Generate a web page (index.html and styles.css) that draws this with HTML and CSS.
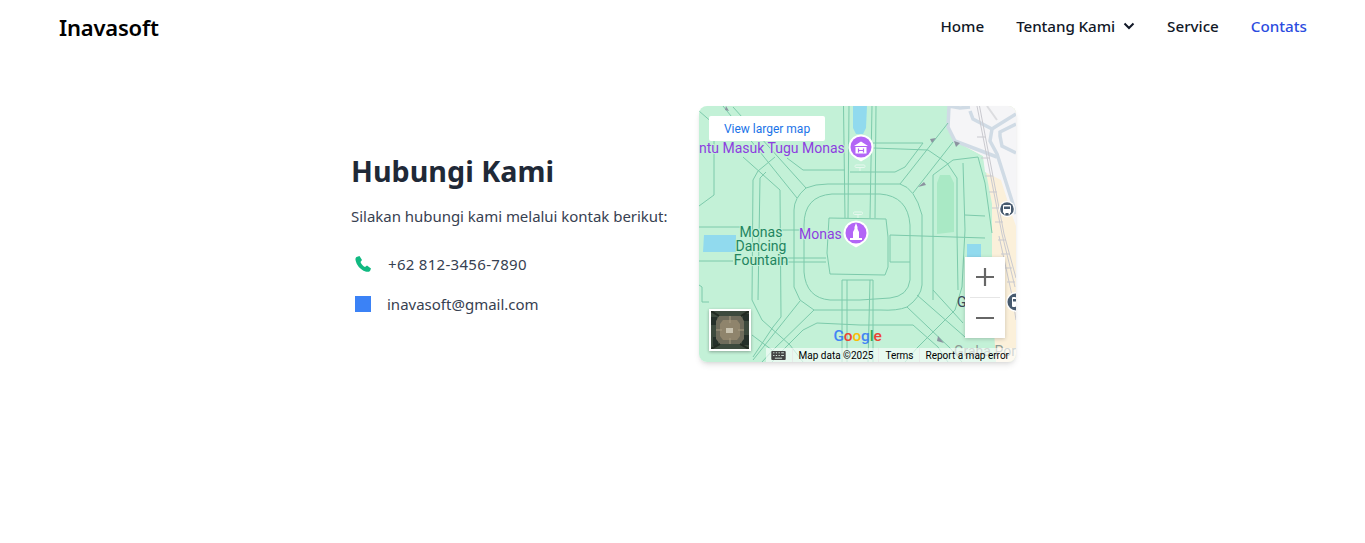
FILE: index.html
```html
<!DOCTYPE html>
<html lang="id">
<head>
<meta charset="utf-8">
<title>Inavasoft</title>
<link rel="stylesheet" href="styles.css">
</head>
<body>
<header class="navbar">
  <a class="brand" href="#">Inavasoft</a>
  <nav class="nav">
    <a class="nav-link" href="#">Home</a>
    <a class="nav-link nav-drop" href="#">Tentang Kami
      <svg class="chevron" viewBox="0 0 12 8" width="12" height="8"><path d="M1.500 1.500 6 6l4.500-4.500" fill="none" stroke="#111827" stroke-width="2"/></svg>
    </a>
    <a class="nav-link" href="#">Service</a>
    <a class="nav-link active" href="#">Contats</a>
  </nav>
</header>
<main class="contact">
  <section class="info">
    <h1 class="title">Hubungi Kami</h1>
    <p class="lead">Silakan hubungi kami melalui kontak berikut:</p>
    <ul class="list">
      <li class="item">
        <svg class="phone" viewBox="0 0 16 16" width="16" height="16"><path d="M1.500 1 4.500 0 7 4 5.500 6C6.500 8.500 8 10 10 11L12 9.500 16 12.500 15 15C14 16 12 16 10.500 15.500 5 13.500 1.500 9 .5 4 .3 2.800.7 1.600 1.500 1Z" fill="#10b981"/></svg>
        <span class="phone-text">+62 812-3456-7890</span>
      </li>
      <li class="item">
        <span class="square"></span>
        <span>inavasoft@gmail.com</span>
      </li>
    </ul>
  </section>
  <div class="map">
    <svg class="map-base" viewBox="699 106 317 256" width="317" height="256">
      <rect x="699" y="106" width="317" height="256" fill="#c3f1d7"/>
      <path d="M949 106 L948 127 L955 141 L983 156 L992 204 L992 300 L996 362 L1016 362 L1016 106Z" fill="#fbf0da"/>
      <path d="M949 106 L948 127 L955 141 L983 156 L985 172 L1001 180 L1012 215 L1016 226 L1016 106Z" fill="#f5f5f7"/>
      <g fill="none" stroke="#d0dbe5" stroke-width="3.500">
        <path d="M970 107 L960 108 L949 106 L948 127 L955 141 L997 157"/>
        <path d="M970 111 L973 119 L992 129 L995 127 L1016 114"/>
        <path d="M992 129 L990 141 L997 154 L1012 201 L1016 214"/>
        <path d="M1016 124 L1000 132 L1000 136 L1002 146 L1016 153"/>
      </g>
      <path d="M987 106 L997 120" fill="none" stroke="#dcdde0" stroke-width="2"/>
      <g fill="none" stroke="#c9c9cf" stroke-width="1">
        <path d="M977 106 L1002 234 L1015 287"/>
        <path d="M979.500 106 L1004 234 L1016 278"/>
        <path d="M999 236 L1013 300 L1016 320"/>
        <path d="M977 137h8M981 158h8M985 176h8M989 192h8M992 208h8M995 222h8M998 240h8M1001 254h8M1004 268h8M1007 282h8"/>
      </g>
      <path d="M853 106h14l-1 22-3 6h-7l-3-6Z" fill="#91daee"/>
      <path d="M704 235h32v17h-33Z" fill="#91daee"/>
      <rect x="967" y="244" width="14" height="14" fill="#91daee"/>
      <path d="M937 183 L940 175 L950 175 L954 183 L954 232 L937 234Z" fill="#a9e9c5"/>
      <g fill="none" stroke="#7ccaab" stroke-width="1">
        <path d="M699 111 L714 124 V195 L699 206"/>
        <path d="M733 107 L806 188"/>
        <path d="M723 106 L797 198"/>
        <path d="M699 227 H740"/>
        <path d="M699 261 H733"/>
        <path d="M699 285 L702 287 V302 H709"/>
        <path d="M743 157 L780 190 L781 317 L773 327 L753 357"/>
        <path d="M775 157 L758 171 L753 180 L752 300 L762 320 L790 345 L803 362"/>
        <path d="M758 300 L760 178 L766 172"/>
        <path d="M787 158 L803 170 H845"/>
        <path d="M794 230 V210 Q794 198 806 188 Q815 184 828 184 H900 Q915 188 922 215 V285 Q921 297 907 307 Q897 311 880 310 H814 L800 300 L794 287 Z"/>
        <path d="M804 225 Q804 196 832 194 H880 Q908 196 910 225 V280 Q908 296 890 298 L860 300 H830 Q806 298 804 272 Z"/>
        <path d="M829 218 L886 219 L888 237 V267 L885 275 L830 274 L827 253 Z"/>
        <path d="M780 230 H800"/>
        <path d="M780 258 H826"/>
        <path d="M780 262 H826"/>
        <path d="M843.500 106 L845 218"/>
        <path d="M849 106 L848 218"/>
        <path d="M872 106 L870 218"/>
        <path d="M876 106 L875 218"/>
        <path d="M873 143 H923 L905 167 L895 172 H850"/>
        <path d="M873 148 L928 150 L947 163 L957 178 V233 L958 290"/>
        <path d="M900 184 L948 123"/>
        <path d="M913 193 L953 142"/>
        <path d="M933 300 V175 L953 160 L978 157 L985 183 L992 233"/>
        <path d="M963 163 L965 230 L962 287 L955 310 L917 348 L905 362"/>
        <path d="M965 215 L985 216"/>
        <path d="M890 235 L985 238"/>
        <path d="M890 235 V262 H910"/>
        <path d="M917 295 L965 337"/>
        <path d="M907 307 L950 348 L962 362"/>
        <path d="M933 290 L963 323"/>
        <path d="M842 280 H873"/>
        <path d="M842 280 L842 362M847 280 L847 362M870 280 L868 362M873 280 L873 362"/>
        <path d="M860 325 H913 L938 347 L948 362"/>
        <path d="M860 325 L817 323 L803 330 L783 350 L772 362"/>
        <path d="M800 301 L753 360"/>
        <path d="M814 310 L773 350 L762 362"/>
        <path d="M752 335 L772 350"/>
      </g>
      <g fill="#8b93a0">
        <path d="M726 106l3 5-4-1z"/>
        <path d="M936 138l-6 1 2 4 z"/>
        <path d="M954 141l6 2-4 4z"/>
        <path d="M918 187l6-5 2 3z"/>
        <path d="M938 336l6 7-7-2z"/>
      </g>
      <g fill="none" stroke="#e6f8ee" stroke-width="1">
        <rect x="855" y="165" width="10" height="2.500" rx="1"/>
        <path d="M860 168v3"/>
        <rect x="853.500" y="212" width="9" height="2.500" rx="1"/>
        <path d="M858 215v3"/>
      </g>
      <g class="label-purple">
        <text x="699" y="153">ntu Masuk Tugu Monas</text>
        <text x="799" y="239">Monas</text>
      </g>
      <g class="label-green">
        <text x="761" y="237">Monas</text>
        <text x="761" y="251">Dancing</text>
        <text x="761" y="265">Fountain</text>
      </g>
      <path d="M861 134.500a12.500 12.500 0 0 1 6 23.500l-6 3.500-6-3.500a12.500 12.500 0 0 1 6-23.500z" fill="#fff"/>
      <circle cx="861" cy="147" r="10.500" fill="#b366f6"/>
      <path d="M854 146l7-4.500 7 4.500zM855.500 147h11v6.500h-11z" fill="#fff"/>
      <path d="M858.500 148.500v4M863.500 148.500v4M858.500 150.500h5" stroke="#b366f6" stroke-width="1.200" fill="none"/>
      <path d="M856 220.500a12.500 12.500 0 0 1 6 23.500l-6 3.500-6-3.500a12.500 12.500 0 0 1 6-23.500z" fill="#fff"/>
      <circle cx="856" cy="233" r="10.500" fill="#b366f6"/>
      <path d="M856 223 L857.500 227 V229 L859 232 V238 H862 V240 H850 V238 H853 V232 L854.500 229 V227Z" fill="#fff"/>
      <circle cx="1007" cy="209" r="8" fill="#fff"/>
      <circle cx="1007" cy="209" r="6.800" fill="#475a6e"/>
      <rect x="1003" y="205" width="8" height="8" rx="1" fill="#fff"/>
      <rect x="1004" y="206.500" width="6" height="2.500" fill="#475a6e"/>
      <rect x="1004" y="213" width="1.500" height="1.500" fill="#fff"/>
      <rect x="1008.500" y="213" width="1.500" height="1.500" fill="#fff"/>
      <circle cx="1016" cy="302" r="10" fill="#fff"/>
      <circle cx="1016" cy="302" r="8.500" fill="#475a6e"/>
      <rect x="1012" y="297" width="4" height="10" rx="1" fill="#fff"/>
      <rect x="1013" y="299" width="3" height="2.500" fill="#475a6e"/>
      <text class="label-dark" x="957" y="307">G</text>
      <text class="label-faint" x="954" y="356">Graha Porta</text>
      <text class="logo" x="833.500" y="341"><tspan fill="#4285f4">G</tspan><tspan fill="#ea4335">o</tspan><tspan fill="#fbbc05">o</tspan><tspan fill="#4285f4">g</tspan><tspan fill="#34a853">l</tspan><tspan fill="#ea4335">e</tspan></text>
    </svg>
    <a class="larger" href="#">View larger map</a>
    <div class="thumb">
      <svg viewBox="0 0 38 38" width="38" height="38">
        <rect width="38" height="38" fill="#3d4a3e"/>
        <path d="M0 6h6v8H0zM32 3h6v7h-6zM2 26h5v9H2zM31 24h7v10h-7z" fill="#25302a"/>
        <path d="M8 5h22l3 5v18l-4 5H9l-4-5V10z" fill="#6f6c5c"/>
        <path d="M12 9h14l3 4v12l-3 4H12l-3-4V13z" fill="#8f846c"/>
        <rect x="15" y="17" width="7" height="5" fill="#c9c3b0"/>
        <path d="M19 5v7M19 27v6M5 19h6M27 19h6" stroke="#a89c82" stroke-width="1"/>
        <path d="M0 0l8 5M38 0l-8 5M0 38l9-5M38 38l-9-5" stroke="#222a22" stroke-width="2"/>
      </svg>
    </div>
    <div class="zoom">
      <button class="zoom-btn" type="button" aria-label="Zoom in"><svg viewBox="0 0 18 18" width="18" height="18"><path d="M0 9h18M9 0v18" stroke="#666" stroke-width="2.200"/></svg></button>
      <span class="zoom-line"></span>
      <button class="zoom-btn" type="button" aria-label="Zoom out"><svg viewBox="0 0 18 18" width="18" height="18"><path d="M0 9h18" stroke="#666" stroke-width="2.200"/></svg></button>
    </div>
    <div class="attrib">
      <span class="attrib-cell key"><svg viewBox="0 0 16 10" width="15" height="9"><path d="M1 0h14a1 1 0 0 1 1 1v8a1 1 0 0 1-1 1H1a1 1 0 0 1-1-1V1a1 1 0 0 1 1-1z" fill="#444"/><path d="M2 2h1.500M5 2h1.500M8 2h1.500M11 2h3M2 5h1.500M5 5h1.500M8 5h1.500M11 5h3M4 8h8" stroke="#dff3e8" stroke-width="1"/></svg></span>
      <span class="attrib-cell tight">Map data ©2025</span>
      <span class="attrib-cell tight">Terms</span>
      <span class="attrib-cell last">Report a map error</span>
    </div>
  </div>
</main>
</body>
</html>
```
FILE: styles.css
```css
* { box-sizing: border-box; }
html, body { margin: 0; padding: 0; }
body {
  background: #fff;
  font-family: "Noto Sans", "Open Sans", sans-serif;
  color: #374151;
  height: 543px;
  overflow: hidden;
}
a { text-decoration: none; color: inherit; }
.navbar {
  display: flex;
  justify-content: space-between;
  align-items: center;
  height: 54px;
  padding: 0 58px 0 59px;
}
.brand {
  font-size: 22px;
  font-weight: 600;
  color: #000;
  letter-spacing: -0.2px;
}
.nav { display: flex; align-items: center; gap: 32px; margin-bottom: 2px; }
.nav-link {
  font-size: 15.200px;
  font-weight: 500;
  color: #111827;
}
.nav-drop { display: flex; align-items: center; gap: 8px; letter-spacing: -0.08px; }
.chevron { display: block; }
.active { color: #2b4ce0; }
.contact {
  display: flex;
  justify-content: center;
  align-items: center;
  gap: 32px;
  padding: 52px 0 0 2px;
}
.info { width: 316px; padding-top: 1px; }
.title {
  margin: 0 0 15px;
  font-size: 28.700px;
  line-height: 36px;
  font-weight: 700;
  color: #1f2937;
}
.lead {
  margin: 0 0 24px;
  font-size: 15px;
  line-height: 24px;
  letter-spacing: -0.03px;
  white-space: nowrap;
}
.list { list-style: none; margin: 0; padding: 0; display: flex; flex-direction: column; gap: 16px; }
.item {
  display: flex;
  align-items: center;
  gap: 16px;
  height: 24px;
  font-size: 15px;
  padding-left: 4px;
}
.phone { flex: none; }
.phone-text { letter-spacing: .3px; margin-left: 1px; }
.square { width: 16px; height: 16px; background: #3b82f6; flex: none; }
.map {
  position: relative;
  flex: none;
  width: 317px;
  height: 256px;
  border-radius: 8px;
  overflow: hidden;
  box-shadow: 0 4px 6px -1px rgba(0,0,0,.1), 0 2px 4px -2px rgba(0,0,0,.1);
  font-family: Roboto, "Liberation Sans", sans-serif;
}
.map-base { display: block; }
.label-purple text {
  font: 14px Roboto, sans-serif;
  fill: #8d3ee0;
  stroke: #c3f1d7;
  stroke-width: 2px;
  paint-order: stroke;
}
.label-green text {
  font: 14px Roboto, sans-serif;
  fill: #1f8560;
  text-anchor: middle;
  stroke: #c3f1d7;
  stroke-width: 2px;
  paint-order: stroke;
}
.label-dark { font: 14px Roboto, sans-serif; fill: #3c4a5a; }
.label-faint { font: 14px Roboto, sans-serif; fill: #8c9a94; }
.logo { font: 500 15.500px Roboto, sans-serif; letter-spacing: -.2px; }
.larger {
  position: absolute;
  left: 10px;
  top: 10px;
  width: 116px;
  height: 25px;
  display: flex;
  align-items: center;
  justify-content: center;
  background: #fff;
  border-radius: 2px;
  color: #1a73e8;
  font-size: 12px;
}
.thumb {
  position: absolute;
  left: 10px;
  top: 203px;
  width: 42px;
  height: 42px;
  border: 2px solid #fff;
  box-shadow: 0 1px 3px rgba(0,0,0,.3);
}
.thumb svg { display: block; }
.zoom {
  position: absolute;
  left: 266px;
  top: 151px;
  width: 40px;
  height: 81px;
  background: #fff;
  display: flex;
  flex-direction: column;
  align-items: center;
  box-shadow: 0 1px 4px rgba(0,0,0,.2);
}
.zoom-btn {
  flex: 1;
  width: 40px;
  border: 0;
  padding: 0;
  background: none;
  display: flex;
  align-items: center;
  justify-content: center;
}
.zoom-line { width: 30px; height: 1px; background: #e6e6e6; flex: none; }
.attrib {
  position: absolute;
  right: 0;
  bottom: 0;
  height: 14px;
  display: flex;
  align-items: center;
  background: rgba(255,255,255,.6);
  font-size: 10px;
  color: #000;
  white-space: nowrap;
}
.attrib-cell {
  display: flex;
  align-items: center;
  height: 14px;
  padding: 0 6px;
  border-right: 1px solid rgba(230,230,230,.8);
}
.key { padding: 0 6px 0 5px; }
.tight { padding-right: 5px; }
.last { border-right: 0; padding-right: 7px; }
```
